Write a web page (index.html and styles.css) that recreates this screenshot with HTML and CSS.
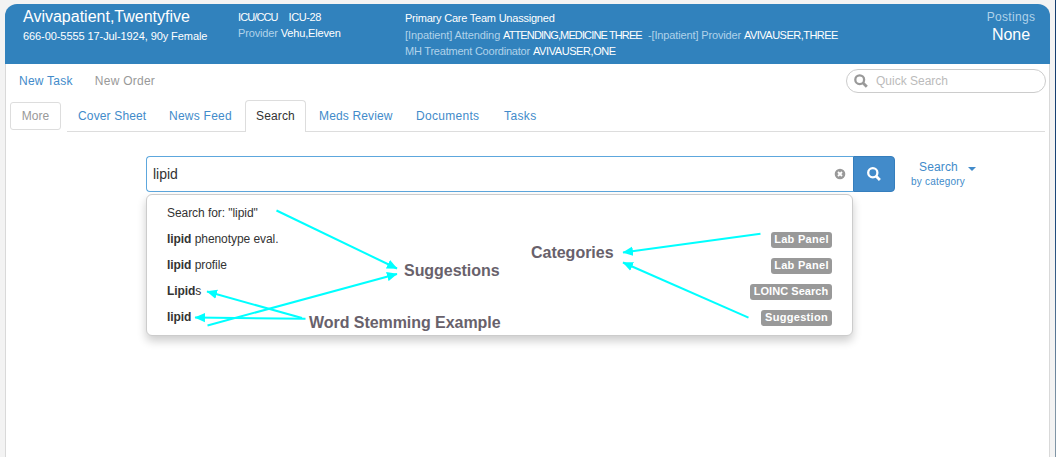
FILE: index.html
```html
<!DOCTYPE html>
<html lang="en">
<head>
<meta charset="utf-8">
<title>Patient Search</title>
<link rel="stylesheet" href="styles.css">
</head>
<body>
<main class="app">
  <header class="banner">
    <section class="patient">
      <div class="patient-name">Avivapatient,Twentyfive</div>
      <div class="patient-info">666-00-5555 17-Jul-1924, 90y Female</div>
    </section>
    <section class="location">
      <div><span class="ward">ICU/CCU</span><span class="room">ICU-28</span></div>
      <div class="provider"><span class="label">Provider</span> <span>Vehu,Eleven</span></div>
    </section>
    <section class="team">
      <div class="care">Primary Care Team Unassigned</div>
      <div class="member"><span class="label attending">[Inpatient] Attending</span><span class="doctor">ATTENDING,MEDICINE THREE</span><span class="label second">-[Inpatient] Provider</span><span class="user-three">AVIVAUSER,THREE</span></div>
      <div class="member"><span class="label coordinator">MH Treatment Coordinator</span><span class="user-one">AVIVAUSER,ONE</span></div>
    </section>
    <section class="postings">
      <div class="postings-label">Postings</div>
      <div class="postings-value">None</div>
    </section>
  </header>
  <div class="toolbar">
    <a class="link">New Task</a>
    <a class="link muted">New Order</a>
    <div class="quick">
      <svg class="quick-icon" viewBox="0 0 14 14"><circle cx="5.7" cy="5.7" r="4.4" fill="none" stroke="currentColor" stroke-width="2.3"/><path d="M8.800 8.800l4 4" stroke="currentColor" stroke-width="2.8"/></svg>
      <span>Quick Search</span>
    </div>
  </div>
  <nav class="nav">
    <button class="more">More</button>
    <div class="tabs">
      <a class="tab cover">Cover Sheet</a>
      <a class="tab news">News Feed</a>
      <a class="tab active">Search</a>
      <a class="tab meds">Meds Review</a>
      <a class="tab docs">Documents</a>
      <a class="tab tasks">Tasks</a>
    </div>
  </nav>
  <section class="search">
    <div class="field">
      <span class="query">lipid</span>
      <svg class="clear" viewBox="0 0 12 12"><circle cx="6" cy="6" r="5.3" fill="#999"/><path d="M4 4l4 4M8 4l-4 4" stroke="#fff" stroke-width="1.8"/></svg>
    </div>
    <button class="go"><svg class="go-icon" viewBox="0 0 14 14"><circle cx="5.8" cy="5.8" r="4.6" fill="none" stroke="currentColor" stroke-width="2.3"/><path d="M9.2 9.2l3.7 3.7" stroke="currentColor" stroke-width="2.8"/></svg></button>
    <div class="category">
      <div class="category-main">Search <i class="caret"></i></div>
      <div class="category-sub">by category</div>
    </div>
  </section>
  <section class="results">
    <div class="result"><span>Search for: "lipid"</span></div>
    <div class="result"><span><b>lipid</b> phenotype eval.</span><em class="badge panel">Lab Panel</em></div>
    <div class="result"><span><b>lipid</b> profile</span><em class="badge panel">Lab Panel</em></div>
    <div class="result"><span><b>Lipid</b>s</span><em class="badge loinc">LOINC Search</em></div>
    <div class="result"><span><b>lipid</b></span><em class="badge suggestion">Suggestion</em></div>
    <svg class="notes" viewBox="146 194 707 142">
      <defs><marker id="head" markerUnits="userSpaceOnUse" markerWidth="11" markerHeight="10" refX="10" refY="5" orient="auto"><path d="M0 .3L10.5 5L0 9.7z" fill="#0ff"/></marker></defs>
      <g class="arrows">
        <path d="M276.5 210.5L397 268.5"/>
        <path d="M207.5 325.5L397 274"/>
        <path d="M302 318L207 291.500"/>
        <path d="M305.500 318.700L195 317.500"/>
        <path d="M760.500 233.700L623 252.500"/>
        <path d="M748.500 317.700L623 262.500"/>
      </g>
      <g class="note">
        <text x="404" y="276" textLength="95.500">Suggestions</text>
        <text x="309" y="328" textLength="191.500">Word Stemming Example</text>
        <text x="531" y="258" textLength="82.500">Categories</text>
      </g>
    </svg>
  </section>
</main>
<div class="edge"></div>
</body>
</html>
```
FILE: styles.css
```css
* { box-sizing: border-box; }
body {
  margin: 0;
  width: 1056px;
  height: 457px;
  overflow: hidden;
  display: flex;
  background: #f3f3f3;
  color: #333;
  font: 12px/16px "Liberation Sans", Arial, sans-serif;
}
.app { width: 1045px; flex: none; height: 453px; margin: 4px 5px 0; background: #fff; border: solid #d9d9d9; border-width: 0 1px; border-radius: 12px 12px 0 0; }
.edge { width: 1px; flex: none; background: linear-gradient(#153e70 0 20%, #1d4a7c 50%, #8095a5 90%); }
.banner { display: flex; height: 60px; margin: 0 -1px; padding-left: 18px; background: #3182bd; color: #fff; border-radius: 12px 12px 0 0; font-size: 11px; white-space: nowrap; }
.label { color: #b0d2ea; }
.patient { flex: none; width: 215px; padding-top: 3px; }
.patient-name { font-size: 16px; line-height: 20px; }
.patient-info { line-height: 18px; letter-spacing: -.08px; }
.location { flex: none; width: 167px; padding-top: 5px; }
.ward { margin-right: 11px; letter-spacing: -.9px; }
.room { letter-spacing: -.4px; }
.provider { letter-spacing: -.15px; }
.team { flex: none; width: 560px; padding-top: 6px; line-height: 16.5px; }
.care { letter-spacing: -.22px; }
.member { display: flex; }
.attending { width: 98px; letter-spacing: -.1px; }
.doctor { width: 145px; letter-spacing: -.87px; }
.second { width: 96px; letter-spacing: -.14px; }
.user-three { letter-spacing: -.52px; }
.coordinator { width: 128px; letter-spacing: -.22px; }
.user-one { letter-spacing: -.42px; }
.postings { width: 92px; margin-right: -8px; padding-top: 5px; text-align: center; }
.postings-label { font-size: 12px; color: #b0d2ea; letter-spacing: .3px; }
.postings-value { font-size: 16px; line-height: 20px; }
.toolbar { display: flex; align-items: center; height: 34px; padding: 0 3px 0 13px; font-size: 12px; letter-spacing: .25px; }
.link { color: #428bca; margin-right: 22px; }
.muted { color: #999; }
.quick { display: flex; align-items: center; width: 200px; height: 24px; margin-left: auto; padding-left: 7px; border: 1px solid #ccc; border-radius: 12px; color: #bbb; letter-spacing: 0; }
.quick-icon { width: 14px; height: 14px; margin-right: 8px; color: #999; }
.nav { display: flex; height: 34px; padding: 2px 4px; }
.more { width: 51px; height: 28px; margin: 2px 6px 0 0; border: 1px solid #ddd; border-radius: 3px; background: #fff; color: #999; font: inherit; letter-spacing: .1px; padding: 0; }
.tabs { display: flex; flex: 1; height: 32px; border-bottom: 1px solid #ddd; letter-spacing: .15px; }
.tab { height: 32px; padding: 7px 0 0 10px; margin-right: 2px; border: 1px solid transparent; border-bottom: 0; color: #428bca; white-space: nowrap; }
.cover { width: 89px; }
.news { width: 85px; letter-spacing: .25px; }
.meds { width: 95px; }
.docs { width: 86px; letter-spacing: .3px; }
.tasks { width: 55px; letter-spacing: .4px; }
.active { width: 61px; color: #333; background: #fff; border-color: #ddd; border-radius: 4px 4px 0 0; }
.search { display: flex; height: 36px; margin: 24px 0 2px 140px; }
.field { display: flex; align-items: center; width: 707px; padding: 0 7px 0 6px; border: 1px solid #5da7dd; border-right: 0; border-radius: 4px 0 0 4px; font-size: 14px; }
.clear { width: 12px; height: 12px; margin-left: auto; }
.go { width: 42px; padding: 0; border: 1px solid #357ebd; border-radius: 0 4px 4px 0; background: #428bca; color: #fff; display: flex; align-items: center; justify-content: center; }
.go-icon { width: 14px; height: 14px; }
.category { width: 68px; margin-left: 16px; padding-top: 3px; color: #428bca; }
.category-main { display: flex; align-items: center; padding-left: 8px; letter-spacing: .15px; }
.caret { margin: 4px 0 0 10px; border: 4px solid transparent; border-top-color: #428bca; border-bottom: 0; }
.category-sub { font-size: 10px; line-height: 14px; letter-spacing: .2px; }
.results { position: relative; width: 707px; height: 142px; margin-left: 140px; padding: 5px 20px; border: 1px solid #ccc; border-radius: 6px; background: #fff; box-shadow: 0 5px 10px rgba(0,0,0,.2); letter-spacing: -.06px; }
.result { display: flex; align-items: center; justify-content: space-between; height: 26px; }
.badge { height: 16px; margin-top: 2px; border-radius: 3px; background: #999; color: #fff; font-size: 11px; font-weight: bold; font-style: normal; line-height: 15px; text-align: center; letter-spacing: .3px; white-space: nowrap; }
.panel { width: 61px; }
.loinc { width: 82px; letter-spacing: .05px; }
.suggestion { width: 71px; }
.notes { position: absolute; left: -1px; top: -1px; width: 707px; height: 142px; }
.arrows path { fill: none; stroke: #0ff; stroke-width: 2; marker-end: url(#head); }
.note { fill: #68616b; font-size: 16px; font-weight: bold; }
```
